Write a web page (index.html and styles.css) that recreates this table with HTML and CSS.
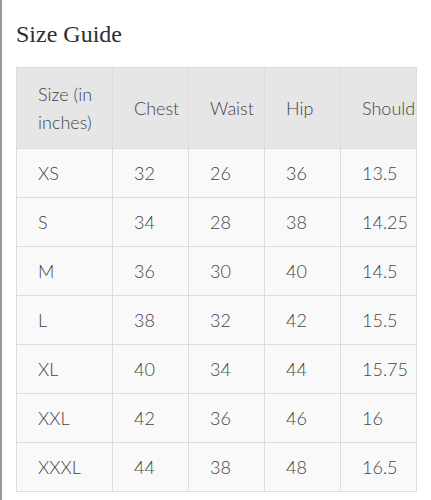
FILE: index.html
```html
<!DOCTYPE html>
<html lang="en">
<head>
<meta charset="utf-8">
<title>Size Guide</title>
<link rel="stylesheet" href="styles.css">
</head>
<body>
<div class="page">
  <h1 class="title">Size Guide</h1>
  <div class="table-wrap">
    <table class="size-table">
      <colgroup>
        <col class="c-size">
        <col class="c-num">
        <col class="c-num">
        <col class="c-num">
        <col class="c-last">
      </colgroup>
      <thead>
        <tr><th>Size (in inches)</th><th>Chest</th><th>Waist</th><th>Hip</th><th>Shoulder</th></tr>
      </thead>
      <tbody>
        <tr><td>XS</td><td>32</td><td>26</td><td>36</td><td>13.5</td></tr>
        <tr><td>S</td><td>34</td><td>28</td><td>38</td><td>14.25</td></tr>
        <tr><td>M</td><td>36</td><td>30</td><td>40</td><td>14.5</td></tr>
        <tr><td>L</td><td>38</td><td>32</td><td>42</td><td>15.5</td></tr>
        <tr><td>XL</td><td>40</td><td>34</td><td>44</td><td>15.75</td></tr>
        <tr><td>XXL</td><td>42</td><td>36</td><td>46</td><td>16</td></tr>
        <tr><td>XXXL</td><td>44</td><td>38</td><td>48</td><td>16.5</td></tr>
      </tbody>
    </table>
  </div>
</div>
</body>
</html>
```

FILE: styles.css
```css
html, body {
  margin: 0;
  padding: 0;
  background: #ffffff;
}

.page {
  border-left: 2px solid #9a9a9a;
  min-height: 500px;
  box-sizing: border-box;
  padding: 20px 14px 0 14px;
}

.title {
  margin: 0 0 19px 0;
  font-family: "Liberation Serif", "Times New Roman", serif;
  font-weight: normal;
  font-size: 24px;
  line-height: 28px;
  color: #2e2e2e;
}

.table-wrap {
  width: 401px;
  overflow: hidden;
  border-right: 1px solid #dcdcdc;
  box-sizing: border-box;
}

.size-table {
  border-collapse: collapse;
  table-layout: fixed;
  width: 440px;
  font-family: Lato, "Liberation Sans", sans-serif;
  font-weight: 300;
  font-size: 18px;
  line-height: 28px;
  color: #444444;
}

.c-size { width: 96px; }
.c-num { width: 76px; }
.c-last { width: 116px; }

.size-table th,
.size-table td {
  border: 1px solid #dcdcdc;
  text-align: left;
  vertical-align: middle;
  font-weight: 300;
  padding: 10px 8px 10px 21px;
  white-space: nowrap;
  overflow: hidden;
}

.size-table th {
  background: #e6e6e6;
  padding-top: 12px;
  padding-bottom: 12px;
  white-space: normal;
  color: #444444;
}

.size-table td {
  background: #f9f9f9;
}
```
